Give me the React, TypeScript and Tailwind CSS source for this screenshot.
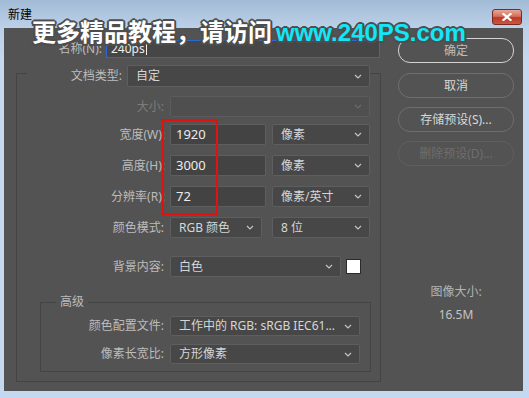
import React from "react";

const FONT = "font-['Noto_Sans','Noto_Sans_CJK_SC',sans-serif]";

function Chevron({ dim }: { dim?: boolean }) {
  return (
    <svg width="8" height="5" viewBox="0 0 8 5" className="shrink-0">
      <polyline
        points="1,1 4,4 7,1"
        fill="none"
        stroke={dim ? "#6a6a6a" : "#c4c4c4"}
        strokeWidth="1.2"
      />
    </svg>
  );
}

function Select({
  text,
  className,
  disabled,
}: {
  text?: string;
  className: string;
  disabled?: boolean;
}) {
  return (
    <div
      className={`flex items-center justify-between rounded-[2px] border pl-[8px] pr-[7px] ${
        disabled ? "border-[#5c5c5c] bg-[#4f4f4f]" : "border-[#5e5e5e] bg-[#474747]"
      } ${className}`}
    >
      <span className="whitespace-nowrap text-[12px] leading-none text-[#d6d6d6]">{text}</span>
      <Chevron dim={disabled} />
    </div>
  );
}

function Input({ text, className }: { text: string; className: string }) {
  return (
    <div
      className={`flex items-center rounded-[1px] border border-[#5e5e5e] bg-[#434343] pl-[5px] text-[13px] text-[#ececec] ${className}`}
    >
      {text}
    </div>
  );
}

function Label({ text, className, dim }: { text: string; className: string; dim?: boolean }) {
  return (
    <div
      className={`flex h-full items-center justify-end whitespace-nowrap text-[12px] ${
        dim ? "text-[#7c7c7c]" : "text-[#bcbcbc]"
      } ${className}`}
    >
      {text}
    </div>
  );
}

function Btn({ text, variant }: { text: string; variant: "primary" | "normal" | "disabled" }) {
  const cls =
    variant === "primary"
      ? "border-[1.5px] border-[#d4d4d4] text-[#bdbdbd]"
      : variant === "normal"
      ? "border border-[#6e6e6e] text-[#d8d8d8]"
      : "border border-[#5f5f5f] text-[#6e6e6e]";
  return (
    <div
      className={`flex h-[25px] w-[116px] items-center justify-center rounded-[12px] text-[12px] ${cls}`}
    >
      {text}
    </div>
  );
}

export default function App() {
  return (
    <div
      className={`relative h-[398px] w-[529px] overflow-hidden bg-[linear-gradient(180deg,#a2bbd6_0px,#bcd1e8_28px,#c4d9ef_60px,#c4d9ef_100%)] ${FONT}`}
    >
      {/* title bar */}
      <div className="flex h-[28px] items-start justify-between">
        <div className="pl-[8px] pt-[7px] text-[12px] leading-[16px] text-black">新建</div>
        <div className="mr-[7px] mt-[9px] flex h-[16px] w-[30px] items-center justify-center rounded-[3px] border border-[#7a2a20] bg-[linear-gradient(180deg,#e8a897_0%,#d3705c_45%,#b9382a_55%,#c85a40_100%)]">
          <svg width="10" height="8" viewBox="0 0 10 8">
            <path d="M1.5 1 L8.5 7 M8.5 1 L1.5 7" stroke="#ffffff" strokeWidth="2.2" strokeLinecap="square" />
          </svg>
        </div>
      </div>

      {/* dark panel */}
      <div className="ml-[4px] flex h-[363px] w-[519px] bg-[#535353]">
        {/* left column */}
        <div className="relative w-[390px] pt-[12px]">
          {/* name row */}
          <div className="flex h-[18px] items-center">
            <Label text="名称(N):" className="w-[102px] pr-[4px]" />
            <div className="flex h-[18px] w-[274px] items-center border border-[#2b68d4] bg-[#464646] pl-[4px] text-[12px] text-[#eeeeee]">
              240ps<span className="ml-[1px] inline-block h-[12px] w-[1px] bg-[#eeeeee]" />
            </div>
          </div>

          {/* outer group */}
          <div className="ml-[12px] mt-[15px] w-[365px] border border-[#444444] pb-[9px]">
            {/* legend row */}
            <div className="-mt-[9px] ml-[10px] flex h-[22px] items-center">
              <Label text="文档类型:" className="w-[100px] bg-[#535353] pr-[5px]" />
              <Select text="自定" className="h-[22px] w-[243px]" />
            </div>

            <div className="mt-[9px] flex h-[21px] items-center">
              <Label text="大小:" dim className="w-[153px] pr-[6px]" />
              <Select disabled className="h-[21px] w-[200px]" />
            </div>

            <div className="mt-[7px] flex h-[21px] items-center">
              <Label text="宽度(W):" className="w-[153px] pr-[5px]" />
              <Input text="1920" className="h-[21px] w-[96px]" />
              <Select text="像素" className="ml-[6px] h-[21px] w-[98px]" />
            </div>

            <div className="mt-[10px] flex h-[21px] items-center">
              <Label text="高度(H):" className="w-[153px] pr-[5px]" />
              <Input text="3000" className="h-[21px] w-[96px]" />
              <Select text="像素" className="ml-[6px] h-[21px] w-[98px]" />
            </div>

            <div className="mt-[10px] flex h-[21px] items-center">
              <Label text="分辨率(R):" className="w-[153px] pr-[5px]" />
              <Input text="72" className="h-[21px] w-[96px]" />
              <Select text="像素/英寸" className="ml-[6px] h-[21px] w-[98px]" />
            </div>

            <div className="mt-[10px] flex h-[21px] items-center">
              <Label text="颜色模式:" className="w-[153px] pr-[6px]" />
              <Select text="RGB 颜色" className="h-[21px] w-[92px]" />
              <Select text="8 位" className="ml-[10px] h-[21px] w-[98px]" />
            </div>

            <div className="mt-[18px] flex h-[21px] items-center">
              <Label text="背景内容:" className="w-[153px] pr-[6px]" />
              <Select text="白色" className="h-[21px] w-[171px]" />
              <div className="ml-[5px] h-[15px] w-[15px] border border-[#2a2a2a] bg-white" />
            </div>

            {/* inner group */}
            <div className="ml-[23px] mt-[25px] w-[331px] border border-[#444444] pb-[7px]">
              <div className="-mt-[8px] ml-[15px] h-[14px] w-fit bg-[#535353] px-[4px] text-[12px] leading-[14px] text-[#bcbcbc]">
                高级
              </div>
              <div className="mt-[7px] flex h-[20px] items-center">
                <Label text="颜色配置文件:" className="w-[129px] pr-[6px]" />
                <Select text="工作中的 RGB: sRGB IEC61..." className="h-[20px] w-[190px]" />
              </div>
              <div className="mt-[8px] flex h-[20px] items-center">
                <Label text="像素长宽比:" className="w-[129px] pr-[6px]" />
                <Select text="方形像素" className="h-[20px] w-[190px]" />
              </div>
            </div>
          </div>

          {/* red annotation box */}
          <div className="absolute left-[158px] top-[91px] h-[96px] w-[56px] border-2 border-[#e3100f]" />
        </div>

        {/* right column */}
        <div className="ml-[4px] flex w-[116px] flex-col items-center pt-[10px]">
          <Btn text="确定" variant="primary" />
          <div className="mt-[10px]">
            <Btn text="取消" variant="normal" />
          </div>
          <div className="mt-[9px]">
            <Btn text="存储预设(S)..." variant="normal" />
          </div>
          <div className="mt-[9px]">
            <Btn text="删除预设(D)..." variant="disabled" />
          </div>
          <div className="mt-[118px] text-[12px] leading-[16px] text-[#b4b4b4]">图像大小:</div>
          <div className="mt-[7px] text-[12px] leading-[16px] text-[#c4c4c4]">16.5M</div>
        </div>
      </div>

      {/* watermark overlay */}
      <div className="pointer-events-none absolute left-[32px] top-[16px] whitespace-nowrap text-[24px] font-bold leading-[30px]">
        <span className="font-['Noto_Sans_CJK_SC',sans-serif] text-white [text-shadow:2px_0_0_#4e4e4e,-2px_0_0_#4e4e4e,0_2px_0_#4e4e4e,0_-2px_0_#4e4e4e,1.5px_1.5px_0_#4e4e4e,-1.5px_-1.5px_0_#4e4e4e,1.5px_-1.5px_0_#4e4e4e,-1.5px_1.5px_0_#4e4e4e]">
          更多精品教程，请访问
        </span>
        <span className="ml-[4px] font-['Liberation_Sans',sans-serif] text-[#13e6f7] [text-shadow:2px_0_0_#4e4e4e,-2px_0_0_#4e4e4e,0_2px_0_#4e4e4e,0_-2px_0_#4e4e4e,1.5px_1.5px_0_#4e4e4e,-1.5px_-1.5px_0_#4e4e4e,1.5px_-1.5px_0_#4e4e4e,-1.5px_1.5px_0_#4e4e4e]">
          www.240PS.com
        </span>
      </div>
    </div>
  );
}
